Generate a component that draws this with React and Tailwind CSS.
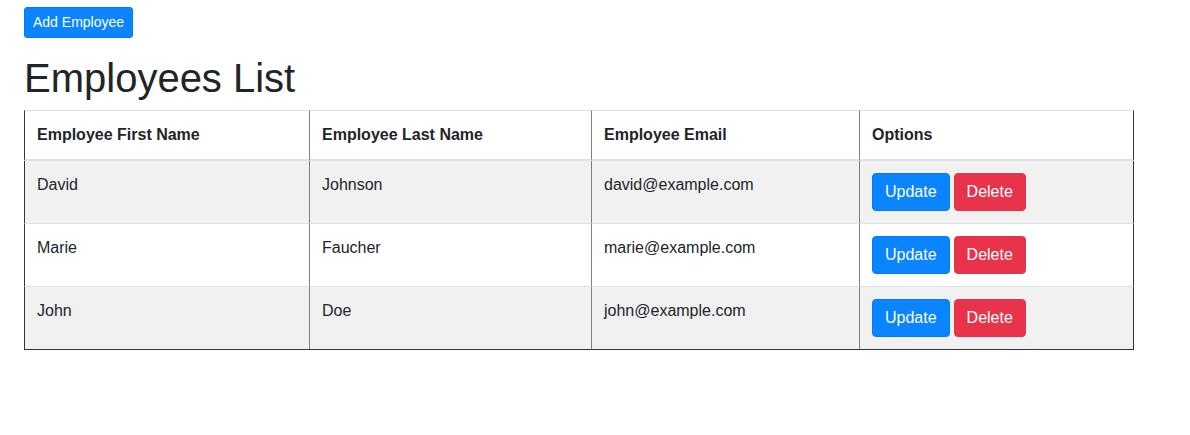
import React from "react";

const employees = [
  { first: "David", last: "Johnson", email: "david@example.com" },
  { first: "Marie", last: "Faucher", email: "marie@example.com" },
  { first: "John", last: "Doe", email: "john@example.com" },
];

export default function App() {
  return (
    <div className="min-h-[435px] bg-white px-[24px] pt-[7px] text-[16px] leading-[24px] text-[#212529] [font-family:'Liberation_Sans',Arial,sans-serif]">
      <button className="rounded-[3px] border border-[#007bff] bg-[#0a84ff] px-[8px] py-[4px] text-[14px] leading-[21px] text-white">
        Add Employee
      </button>
      <h1 className="mt-[16px] mb-[8px] text-[40px] font-normal leading-[48px]">Employees List</h1>
      <div className="grid w-[1110px] grid-cols-[285px_282px_268px_275px]">
        {["Employee First Name", "Employee Last Name", "Employee Email", "Options"].map((h, i) => (
          <div
            key={h}
            className={`border-t border-b-2 border-t-[#dee2e6] border-b-[#dee2e6] p-[12px] font-bold ${
              i === 0 ? "border-l border-l-[#333]" : "border-l border-l-[#808080]"
            } ${i === 3 ? "border-r border-r-[#333]" : ""}`}
          >
            {h}
          </div>
        ))}
        {employees.map((e, r) => {
          const bg = r % 2 === 0 ? "bg-[#f1f1f1]" : "bg-white";
          const top = r === 0 ? "" : "border-t border-t-[#dee2e6]";
          const bottom = r === employees.length - 1 ? "border-b border-b-[#333]" : "";
          return (
            <React.Fragment key={e.email}>
              <div className={`${bg} ${top} ${bottom} border-l border-l-[#333] px-[12px] pt-[12px]`}>
                {e.first}
              </div>
              <div className={`${bg} ${top} ${bottom} border-l border-l-[#808080] px-[12px] pt-[12px]`}>
                {e.last}
              </div>
              <div className={`${bg} ${top} ${bottom} border-l border-l-[#808080] px-[12px] pt-[12px]`}>
                {e.email}
              </div>
              <div className={`${bg} ${top} ${bottom} border-l border-l-[#808080] border-r border-r-[#333] px-[12px] py-[12px] flex items-start gap-[4px]`}>
                <button className="h-[38px] rounded-[4px] border border-[#007bff] bg-[#0a84ff] px-[12px] text-white">
                  Update
                </button>
                <button className="h-[38px] rounded-[4px] border border-[#e4344a] bg-[#e8334a] px-[12px] text-white">
                  Delete
                </button>
              </div>
            </React.Fragment>
          );
        })}
      </div>
    </div>
  );
}
